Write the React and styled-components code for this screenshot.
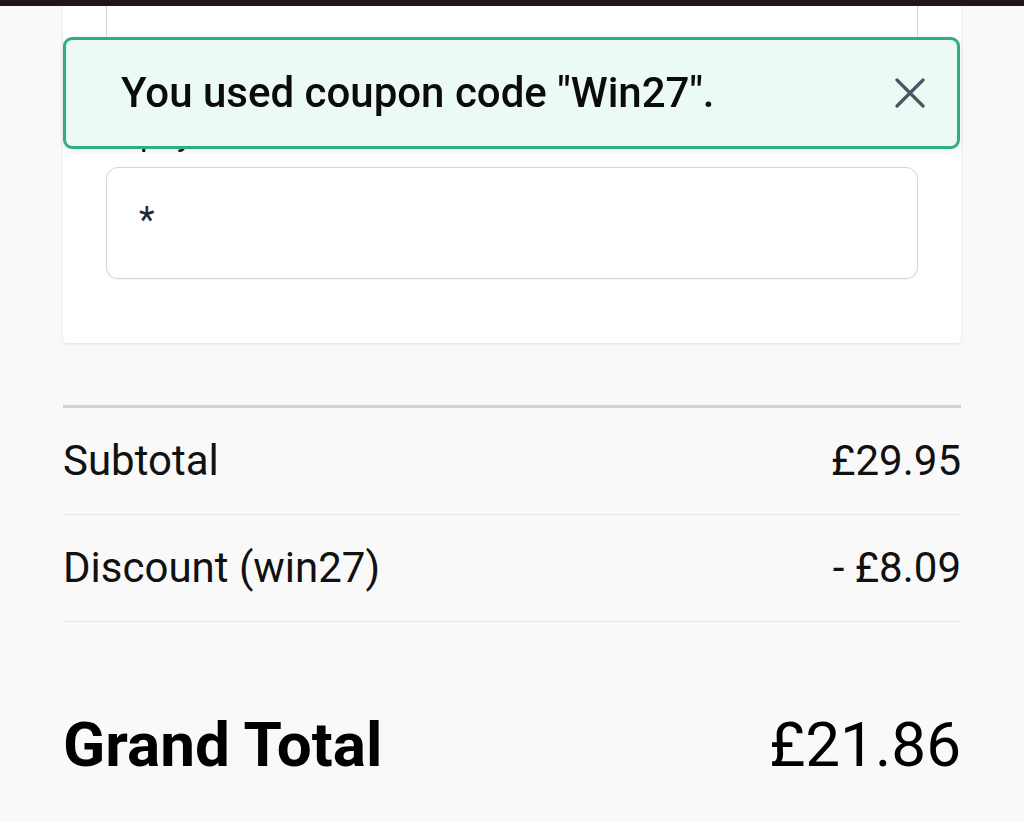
import styled, { createGlobalStyle } from 'styled-components';

const GlobalStyle = createGlobalStyle`
  html, body {
    margin: 0;
    padding: 0;
    background: #f9f9f9;
    font-family: Roboto, "Liberation Sans", sans-serif;
    color: #111;
  }
`;

export default function App() {
  return (
    <>
      <GlobalStyle />
      <TopBar />
      <Page>
        <Card>
          <Input />
          <Label>Expiry date</Label>
          <Input>
            <Placeholder>*</Placeholder>
          </Input>
        </Card>

        <Summary>
          <Row>
            <span>Subtotal</span>
            <span>£29.95</span>
          </Row>
          <Row>
            <span>Discount (win27)</span>
            <span>- £8.09</span>
          </Row>
          <TotalRow>
            <TotalLabel>Grand Total</TotalLabel>
            <span>£21.86</span>
          </TotalRow>
        </Summary>
      </Page>

      <Toast>
        <ToastText>You used coupon code "Win27".</ToastText>
        <CloseButton aria-label="close">
          <svg width="30" height="30" viewBox="0 0 30 30" fill="none">
            <path d="M2 2 L28 28 M28 2 L2 28" stroke="#4b5563" strokeWidth="3.2" strokeLinecap="round" />
          </svg>
        </CloseButton>
      </Toast>
    </>
  );
}

const TopBar = styled.div`
  position: fixed;
  top: 0;
  left: 0;
  right: 0;
  height: 6px;
  background: #1f1616;
  z-index: 20;
`;

const Page = styled.div`
  height: 822px;
  overflow: hidden;
  padding: 0 63px;
  box-sizing: border-box;
`;

const Card = styled.div`
  margin-top: -60px;
  background: #fff;
  border-radius: 4px;
  box-shadow: 0 1px 3px rgba(0, 0, 0, 0.1);
  padding: 40px 43px 64px;
  display: flex;
  flex-direction: column;
`;

const Input = styled.div`
  height: 112px;
  box-sizing: border-box;
  border: 1.5px solid #d6d6da;
  border-radius: 12px;
  background: #fff;
  box-shadow: 0 1px 2px rgba(0, 0, 0, 0.06);
  display: flex;
  align-items: center;
  padding-left: 32px;
`;

const Label = styled.label`
  margin: 25px 0 14px;
  font-size: 32px;
  line-height: 36px;
  color: #111;
`;

const Placeholder = styled.span`
  font-size: 36px;
  color: #1f2937;
  margin-top: -6px;
`;

const Summary = styled.div`
  margin-top: 62px;
  border-top: 3px solid #d1d5db;
`;

const Row = styled.div`
  display: flex;
  justify-content: space-between;
  align-items: center;
  padding: 29px 0;
  line-height: 48px;
  font-size: 42px;
  color: #111;
  border-bottom: 1.5px solid #e5e5e5;
`;

const TotalRow = styled.div`
  display: flex;
  justify-content: space-between;
  align-items: center;
  padding-top: 86px;
  font-size: 62px;
  line-height: 74px;
  color: #000;
`;

const TotalLabel = styled.span`
  font-weight: 700;
`;

const Toast = styled.div`
  position: fixed;
  top: 37px;
  left: 63px;
  width: 897px;
  height: 112px;
  box-sizing: border-box;
  border: 3px solid #2fae86;
  border-radius: 9px;
  background: #ebfbf4;
  box-shadow: 0 2px 6px rgba(0, 0, 0, 0.08);
  display: flex;
  align-items: center;
  justify-content: space-between;
  padding: 0 32px 0 55px;
  z-index: 10;
`;

const ToastText = styled.span`
  font-size: 42px;
  font-weight: 500;
  color: #0b0b0b;
  margin-top: -2px;
`;

const CloseButton = styled.button`
  border: 0;
  background: none;
  padding: 0;
  display: flex;
  cursor: pointer;
`;
